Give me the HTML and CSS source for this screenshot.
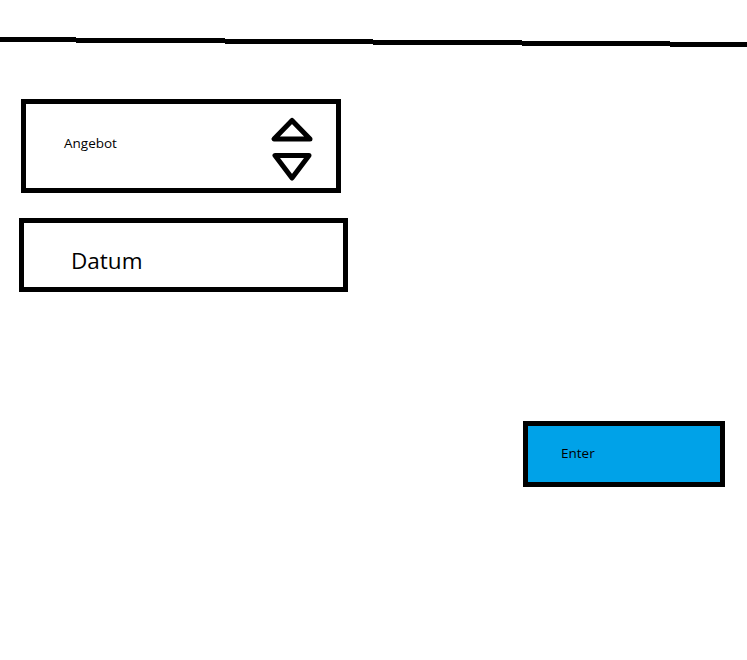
FILE: index.html
```html
<!DOCTYPE html>
<html lang="de">
<head>
<meta charset="utf-8">
<title>Angebot</title>
<link rel="stylesheet" href="styles.css">
</head>
<body>
<div class="rule">
  <div class="seg s1"></div>
  <div class="seg s2"></div>
  <div class="seg s3"></div>
  <div class="seg s4"></div>
  <div class="seg s5"></div>
  <div class="seg s6"></div>
</div>
<main class="form">
  <div class="box spinner">
    <span class="label small">Angebot</span>
    <svg class="arrows" width="50" height="72" viewBox="266 113 50 72" aria-hidden="true">
      <polygon points="291,120.5 273,139 309,139" fill="none" stroke="#000" stroke-width="5" stroke-linejoin="round"/>
      <polygon points="274,155.5 308,155.5 291,178" fill="none" stroke="#000" stroke-width="5" stroke-linejoin="round"/>
    </svg>
  </div>
  <div class="box date">
    <span class="label large">Datum</span>
  </div>
  <div class="box enter">
    <span class="label small">Enter</span>
  </div>
</main>
</body>
</html>
```
FILE: styles.css
```css
html, body {
  margin: 0;
  padding: 0;
  background: #fff;
}
body {
  width: 747px;
  height: 660px;
  font-family: "Open Sans", "Noto Sans", sans-serif;
  color: #000;
  overflow: hidden;
}
.rule {
  display: flex;
  align-items: flex-start;
  height: 47px;
}
.seg {
  height: 5px;
  background: #000;
}
.s1 { width: 76px;  margin-top: 37px; }
.s2 { width: 149px; margin-top: 38px; }
.s3 { width: 148px; margin-top: 39px; }
.s4 { width: 149px; margin-top: 40px; }
.s5 { width: 148px; margin-top: 41px; }
.s6 { width: 77px;  margin-top: 42px; }

.form {
  display: flex;
  flex-direction: column;
  align-items: flex-start;
  padding-top: 52px;
}
.box {
  box-sizing: border-box;
  border: 5px solid #000;
  display: flex;
  align-items: flex-start;
}
.label { display: block; }
.small { font-size: 13.5px; line-height: 18px; }
.large { font-size: 22.5px; line-height: 30px; }

.spinner {
  margin-left: 21px;
  width: 320px;
  height: 94px;
}
.spinner .label {
  margin-left: 38px;
  margin-top: 30px;
}
.arrows {
  display: block;
  margin-left: auto;
  margin-right: 19px;
  margin-top: 9px;
}

.date {
  margin-left: 19px;
  margin-top: 25px;
  width: 329px;
  height: 74px;
}
.date .label {
  margin-left: 47px;
  margin-top: 23px;
}

.enter {
  margin-left: 523px;
  margin-top: 129px;
  width: 202px;
  height: 66px;
  background: #00a2e8;
}
.enter .label {
  margin-left: 33px;
  margin-top: 18px;
}
```
